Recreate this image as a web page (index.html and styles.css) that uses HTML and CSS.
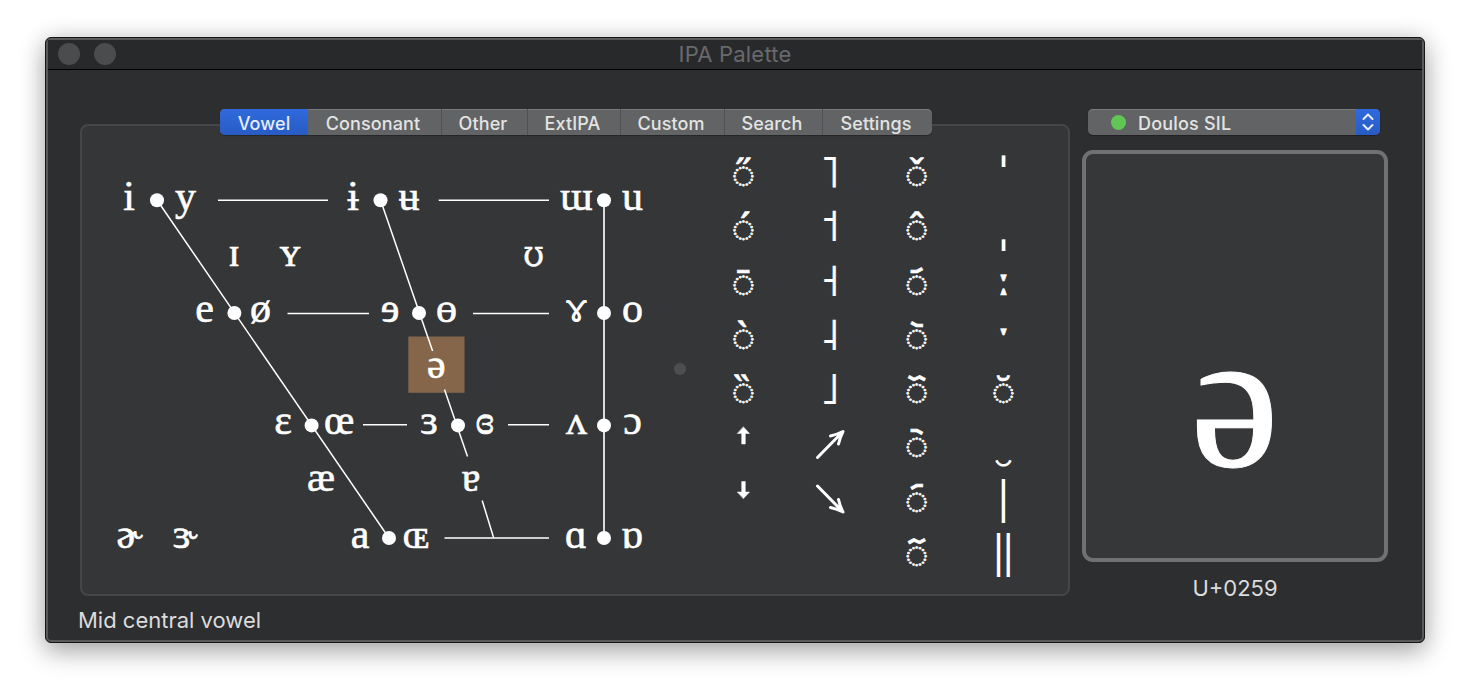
FILE: index.html
```html
<!DOCTYPE html>
<html lang="en">
<head>
<meta charset="utf-8">
<title>IPA Palette</title>
<link rel="stylesheet" href="styles.css">
</head>
<body>
<main class="window">
  <header class="titlebar">
    <span class="light"></span><span class="light"></span>
    <h1 class="title">IPA Palette</h1>
  </header>
  <div class="content">
    <section class="palette">
      <nav class="tabs">
        <span class="tab tab-vowel active">Vowel</span>
        <span class="tab tab-consonant">Consonant</span>
        <span class="tab tab-other">Other</span>
        <span class="tab tab-ext">ExtIPA</span>
        <span class="tab tab-custom">Custom</span>
        <span class="tab tab-search">Search</span>
        <span class="tab tab-settings">Settings</span>
      </nav>
      <div class="panel">
        <svg class="chart" width="588" height="468" viewBox="82 126 588 468">
          <rect class="highlight" x="408.3" y="336.5" width="56.2" height="56.3"/>
          <g class="lines">
            <path d="M218 200.3H328M438.7 200.3H549M287.5 313.4H369M473 313.4H549M363 424.7H407M508 424.7H549M444.5 538H549"/>
            <path d="M157 200L389 538M380.5 200L432.6 351M444.5 389.5L467.5 456.5M482.2 500.5L493.7 538"/>
            <path class="back" d="M604 200V538"/>
          </g>
          <g class="dots">
            <circle cx="157" cy="200.2" r="7"/><circle cx="380.5" cy="200.2" r="7"/><circle cx="604" cy="200.2" r="7"/>
            <circle cx="234.4" cy="313" r="7"/><circle cx="419" cy="313" r="7"/><circle cx="604" cy="313" r="7"/>
            <circle cx="311.6" cy="425.4" r="7"/><circle cx="458" cy="425.4" r="7"/><circle cx="604" cy="425.4" r="7"/>
            <circle cx="389" cy="538" r="7"/><circle cx="604" cy="538" r="7"/>
          </g>
          <g class="vowels">
            <text x="129" y="210">i</text><text x="185.5" y="210">y</text><text x="353" y="210">ɨ</text><text x="409" y="210">ʉ</text><text x="576.3" y="210">ɯ</text><text x="632.5" y="210">u</text>
            <text x="234" y="266">ɪ</text><text x="290" y="266">ʏ</text><text class="horseshoe" x="533.5" y="266">ʊ</text>
            <text x="204.7" y="322">e</text><text x="260.5" y="322">ø</text><text x="390.2" y="322">ɘ</text><text x="446.5" y="322">ɵ</text><text class="horns" x="576.5" y="322">ɤ</text><text x="632.5" y="322">o</text>
            <text x="436.3" y="378">ə</text>
            <text x="283" y="434">ɛ</text><text x="339.2" y="434">œ</text><text x="429" y="434">ɜ</text><text x="484.7" y="434">ɞ</text><text x="576.5" y="434">ʌ</text><text x="632.5" y="434">ɔ</text>
            <text x="321" y="491">æ</text><text x="471" y="491">ɐ</text>
            <text x="129.5" y="548">ɚ</text><text x="185" y="548">ɝ</text><text x="360" y="548">a</text><text x="416" y="548">ɶ</text><text x="576" y="548">ɑ</text><text x="632" y="548">ɒ</text>
          </g>
        </svg>
        <div class="divider"><span class="grip"></span></div>
        <div class="tones">
          <span class="tone">◌̋</span><span class="tone letter">˥</span><span class="tone">◌̌</span><span class="tone stress">ˈ</span>
          <span class="tone">◌́</span><span class="tone letter">˦</span><span class="tone">◌̂</span><span class="tone stress low">ˌ</span>
          <span class="tone">◌̄</span><span class="tone letter">˧</span><span class="tone">◌᷄</span><span class="tone length">ː</span>
          <span class="tone">◌̀</span><span class="tone letter">˨</span><span class="tone">◌᷅</span><span class="tone length">ˑ</span>
          <span class="tone">◌̏</span><span class="tone letter">˩</span><span class="tone">◌᷈</span><span class="tone">◌̆</span>
          <span class="tone icon"><svg width="28" height="54" viewBox="0 0 28 54"><path class="solid" d="M14.500 12L20.500 18.500H16.300V29H12.700V18.500H8.500Z"/></svg></span><span class="tone icon"><svg width="30" height="54" viewBox="0 0 30 54"><path d="M2.500 42.500L27.500 17M15.500 21Q22 19.500 28 16.500Q25 22.500 23.500 29"/></svg></span><span class="tone">◌᷆</span><span class="tone tie">‿</span>
          <span class="tone icon"><svg width="28" height="54" viewBox="0 0 28 54"><path class="solid" d="M14.500 28.500L20.500 22H16.300V11.500H12.700V22H8.500Z"/></svg></span><span class="tone icon"><svg width="30" height="54" viewBox="0 0 30 54"><path d="M2.500 16L27.500 41.500M23.500 29.500Q25 36 28 42Q22 39 15.500 37.500"/></svg></span><span class="tone">◌᷇</span><span class="tone bar">|</span>
          <span class="tone"></span><span class="tone"></span><span class="tone">◌᷉</span><span class="tone bar">‖</span>
        </div>
      </div>
      <p class="status">Mid central vowel</p>
    </section>
    <aside class="preview">
      <div class="popup">
        <span class="ready"></span>
        <span class="font-name">Doulos SIL</span>
        <span class="stepper"><svg width="24" height="26" viewBox="0 0 24 26"><path d="M7.500 10L12 5.500L16.500 10M7.500 16L12 20.500L16.500 16"/></svg></span>
      </div>
      <div class="glyph-box"><span class="glyph">ə</span></div>
      <p class="codepoint">U+0259</p>
    </aside>
  </div>
</main>
</body>
</html>
```
FILE: styles.css
```css
* { box-sizing: border-box; }
body {
  margin: 0;
  padding: 37px 45px 53px;
  height: 696px;
  background: #fff;
  font-family: Inter, "Liberation Sans", sans-serif;
  overflow: hidden;
}
.window {
  height: 606px;
  border: 1px solid #161617;
  border-radius: 6px;
  background: #2d2e30;
  box-shadow: inset 0 0 0 2px #58595b, 0 9px 26px rgba(0,0,0,.3), 0 0 24px rgba(0,0,0,.12);
  padding: 2px;
}
.titlebar {
  display: grid;
  grid-template-columns: 22px 22px 1fr;
  column-gap: 14px;
  align-items: center;
  height: 30px;
  padding: 0 82px 2px 10px;
  background: #28292b;
  border-bottom: 1px solid #000;
}
.light { width: 22px; height: 22px; border-radius: 50%; background: #4b4c4e; }
.title {
  margin: 0;
  padding-top: 1px;
  text-align: center;
  font-size: 22px;
  line-height: 27px;
  font-weight: 400;
  letter-spacing: .2px;
  color: #68696b;
}
.content { display: flex; gap: 12px; padding: 39px 34px 0 32px; }
.palette { width: 990px; }
.tabs {
  position: relative;
  z-index: 1;
  display: flex;
  width: 712px;
  height: 26px;
  margin: 0 0 -11px 140px;
  border-radius: 5px;
  overflow: hidden;
  background: #626365;
  box-shadow: inset 0 1px #7a7b7c, 0 1px 1px rgba(0,0,0,.3);
}
.tab {
  border-right: 1px solid #505153;
  padding-right: 3px;
  text-align: center;
  font-size: 18px;
  line-height: 29px;
  font-weight: 500;
  letter-spacing: .1px;
  color: #e2e3e3;
}
.tab:last-child { border-right: 0; }
.tab-vowel { width: 88px; }
.tab-consonant { width: 134px; }
.tab-other { width: 86px; }
.tab-ext { width: 93px; }
.tab-custom { width: 104px; }
.tab-search { width: 98px; }
.tab-settings { width: 109px; }
.active { background: linear-gradient(#2f69dc, #285cc4); border: 0; padding: 0; color: #e6edfb; }
.panel {
  display: flex;
  height: 472px;
  border: 2px solid #454648;
  border-radius: 8px;
  background: #353638;
}
.chart { flex: none; display: block; }
.highlight { fill: #85664b; }
.lines { fill: none; stroke: #fff; stroke-width: 1.5; }
.back { stroke: #d8dada; stroke-width: 2; }
.dots { fill: #fff; }
.vowels {
  font-family: "Liberation Serif", serif;
  font-size: 42px;
  fill: #fff;
  stroke: #fff;
  stroke-width: .6;
  text-anchor: middle;
}
.horseshoe { font-family: "DejaVu Serif Condensed", "DejaVu Serif", serif; font-size: 38px; stroke-width: .3; }
.horns { font-family: "Noto Sans", sans-serif; font-size: 40px; stroke-width: 0; }
.divider { width: 20px; display: flex; align-items: center; justify-content: center; padding-top: 18px; }
.grip { width: 12px; height: 12px; border-radius: 50%; background: #4d4e50; }
.tones {
  display: grid;
  grid-template-columns: repeat(4, 86.7px);
  grid-template-rows: repeat(8, 54.3px);
  padding: 18px 0 0 10px;
}
.tone {
  height: 54px;
  text-align: center;
  font-family: "Noto Sans", "DejaVu Sans", sans-serif;
  font-size: 40px;
  line-height: 58px;
  color: #fff;
  -webkit-text-stroke: .6px #fff;
}
.letter { font-size: 43px; line-height: 53px; -webkit-text-stroke: .2px #fff; }
.stress { font-size: 44px; line-height: 57px; -webkit-text-stroke: 0; }
.low { line-height: 54px; }
.length { font-family: "DejaVu Serif", serif; font-size: 46px; line-height: 52px; }
.tie { font-size: 26px; line-height: 70px; -webkit-text-stroke: 1.2px #fff; }
.bar { font-size: 44px; line-height: 51px; -webkit-text-stroke: 0; }
.icon svg { display: block; margin: 0 auto; fill: none; stroke: #fff; stroke-width: 3; stroke-linecap: round; stroke-linejoin: round; }
.icon .solid { fill: #fff; stroke-width: .5; }
.status { margin: 10px 0 0 -2px; font-size: 22px; line-height: 28px; color: #dcdcdd; }
.preview { width: 306px; }
.popup {
  display: flex;
  align-items: center;
  width: 292px;
  height: 26px;
  margin-left: 6px;
  border-radius: 5px;
  overflow: hidden;
  background: #626365;
  box-shadow: inset 0 1px #7a7b7c, 0 1px 1px rgba(0,0,0,.3);
  color: #e2e3e3;
}
.ready { width: 15px; height: 15px; margin: 0 12px 0 23px; border-radius: 50%; background: #61c654; }
.font-name { flex: 1; font-size: 18px; line-height: 29px; font-weight: 500; letter-spacing: .2px; padding-top: 3px; }
.stepper { width: 24px; height: 26px; background: linear-gradient(#2f69dc, #285cc4); }
.stepper svg { display: block; fill: none; stroke: #e6edfb; stroke-width: 2; stroke-linecap: round; stroke-linejoin: round; }
.glyph-box {
  height: 412px;
  margin-top: 15px;
  border: 4px solid #707173;
  border-radius: 11px;
  background: #363739;
  text-align: center;
  overflow: hidden;
}
.glyph {
  font-family: "Liberation Serif", serif;
  font-size: 200px;
  line-height: 489px;
  color: #fff;
  -webkit-text-stroke: 1px #fff;
}
.codepoint { margin: 12px 0 0; text-align: center; font-size: 22px; line-height: 28px; color: #dcdcdd; }
```
